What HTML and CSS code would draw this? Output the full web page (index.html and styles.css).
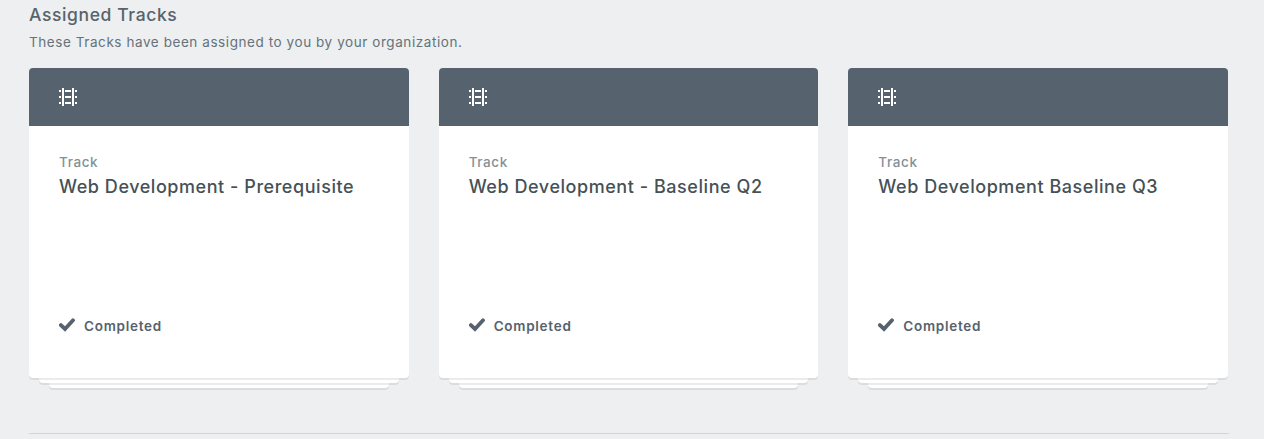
FILE: index.html
```html
<!DOCTYPE html>
<html lang="en">
<head>
<meta charset="utf-8">
<title>Assigned Tracks</title>
<link rel="stylesheet" href="styles.css">
</head>
<body>
<svg width="0" height="0" class="sprite" aria-hidden="true">
  <symbol id="track" viewBox="0 0 18 18"><path d="M3 0h2v18H3zM13 0h2v18h-2zM0 2h2v2H0zM0 8h2v2H0zM0 14h2v2H0zM6 2h6v2H6zM6 8h6v2H6zM6 14h6v2H6zM16 2h2v2h-2zM16 8h2v2h-2zM16 14h2v2h-2z"/></symbol>
  <symbol id="check" viewBox="0 0 16 14"><path d="M1.9 7.1 6 11 14 2.3" fill="none" stroke="currentColor" stroke-width="3.8" stroke-linecap="round"/></symbol>
</svg>
<main class="section">
  <h1 class="heading">Assigned Tracks</h1>
  <p class="intro">These Tracks have been assigned to you by your organization.</p>
  <div class="cards">
    <article class="card">
      <div class="face">
        <div class="banner"><svg class="track-icon"><use href="#track"/></svg></div>
        <div class="content"><div class="kind">Track</div><h2 class="title">Web Development - Prerequisite</h2>
        <div class="status"><svg class="check-icon"><use href="#check"/></svg><span class="done">Completed</span></div></div>
      </div>
      <div class="layer"></div><div class="layer layer-last"></div>
    </article>
    <article class="card">
      <div class="face">
        <div class="banner"><svg class="track-icon"><use href="#track"/></svg></div>
        <div class="content"><div class="kind">Track</div><h2 class="title">Web Development - Baseline Q2</h2>
        <div class="status"><svg class="check-icon"><use href="#check"/></svg><span class="done">Completed</span></div></div>
      </div>
      <div class="layer"></div><div class="layer layer-last"></div>
    </article>
    <article class="card">
      <div class="face">
        <div class="banner"><svg class="track-icon"><use href="#track"/></svg></div>
        <div class="content"><div class="kind">Track</div><h2 class="title">Web Development Baseline Q3</h2>
        <div class="status"><svg class="check-icon"><use href="#check"/></svg><span class="done">Completed</span></div></div>
      </div>
      <div class="layer"></div><div class="layer layer-last"></div>
    </article>
  </div>
  <hr class="rule">
</main>
</body>
</html>
```

FILE: styles.css
```css
* { box-sizing: border-box; margin: 0; }
body { background: #edeff0; font-family: Inter, "Open Sans", sans-serif; color: #57636b; overflow: hidden; }
.sprite { position: absolute; }
.section { width: 1199px; margin-left: 29px; padding-top: 3px; }
.heading { font-size: 17.5px; line-height: 24px; font-weight: 500; letter-spacing: 0.62px; }
.intro { font-size: 13.5px; line-height: 20px; margin-top: 5px; height: 36px; letter-spacing: 0.57px; color: #66727a; }
.cards { display: grid; grid-template-columns: repeat(3, 1fr); gap: 30px; }
.card { display: flex; flex-direction: column; height: 322px; }
.face { position: relative; z-index: 2; height: 310px; background: #fff; border-radius: 4px; box-shadow: 0 2px 0 rgba(0, 0, 0, 0.08); }
.banner { height: 58px; padding: 20px 30px; background: #56626d; border-radius: 4px 4px 0 0; }
.track-icon { display: block; width: 18px; height: 18px; fill: #fff; }
.content { height: 252px; padding: 26px 30px 0; display: flex; flex-direction: column; }
.kind { font-size: 13.5px; line-height: 20px; font-weight: 500; letter-spacing: 0.6px; color: #829196; }
.title { font-size: 18px; line-height: 26px; margin-top: 2px; font-weight: 500; letter-spacing: 0.55px; color: #455157; white-space: nowrap; }
.status { display: flex; align-items: center; gap: 9px; height: 20px; margin-top: 116px; color: #56626d; }
.check-icon { width: 16px; height: 14px; margin-top: -3px; }
.done { font-size: 13.5px; line-height: 20px; font-weight: 600; letter-spacing: 0.73px; }
.layer { position: relative; z-index: 1; flex: none; height: 5px; margin: 0 10px; background: #fff; border-radius: 0 0 4px 4px; box-shadow: 0 2px 0 rgba(0, 0, 0, 0.08); }
.layer-last { z-index: 0; margin: 0 20px; }
.rule { width: 1200px; height: 1px; margin-top: 43px; border: 0; background: #d1d6d9; }
```
